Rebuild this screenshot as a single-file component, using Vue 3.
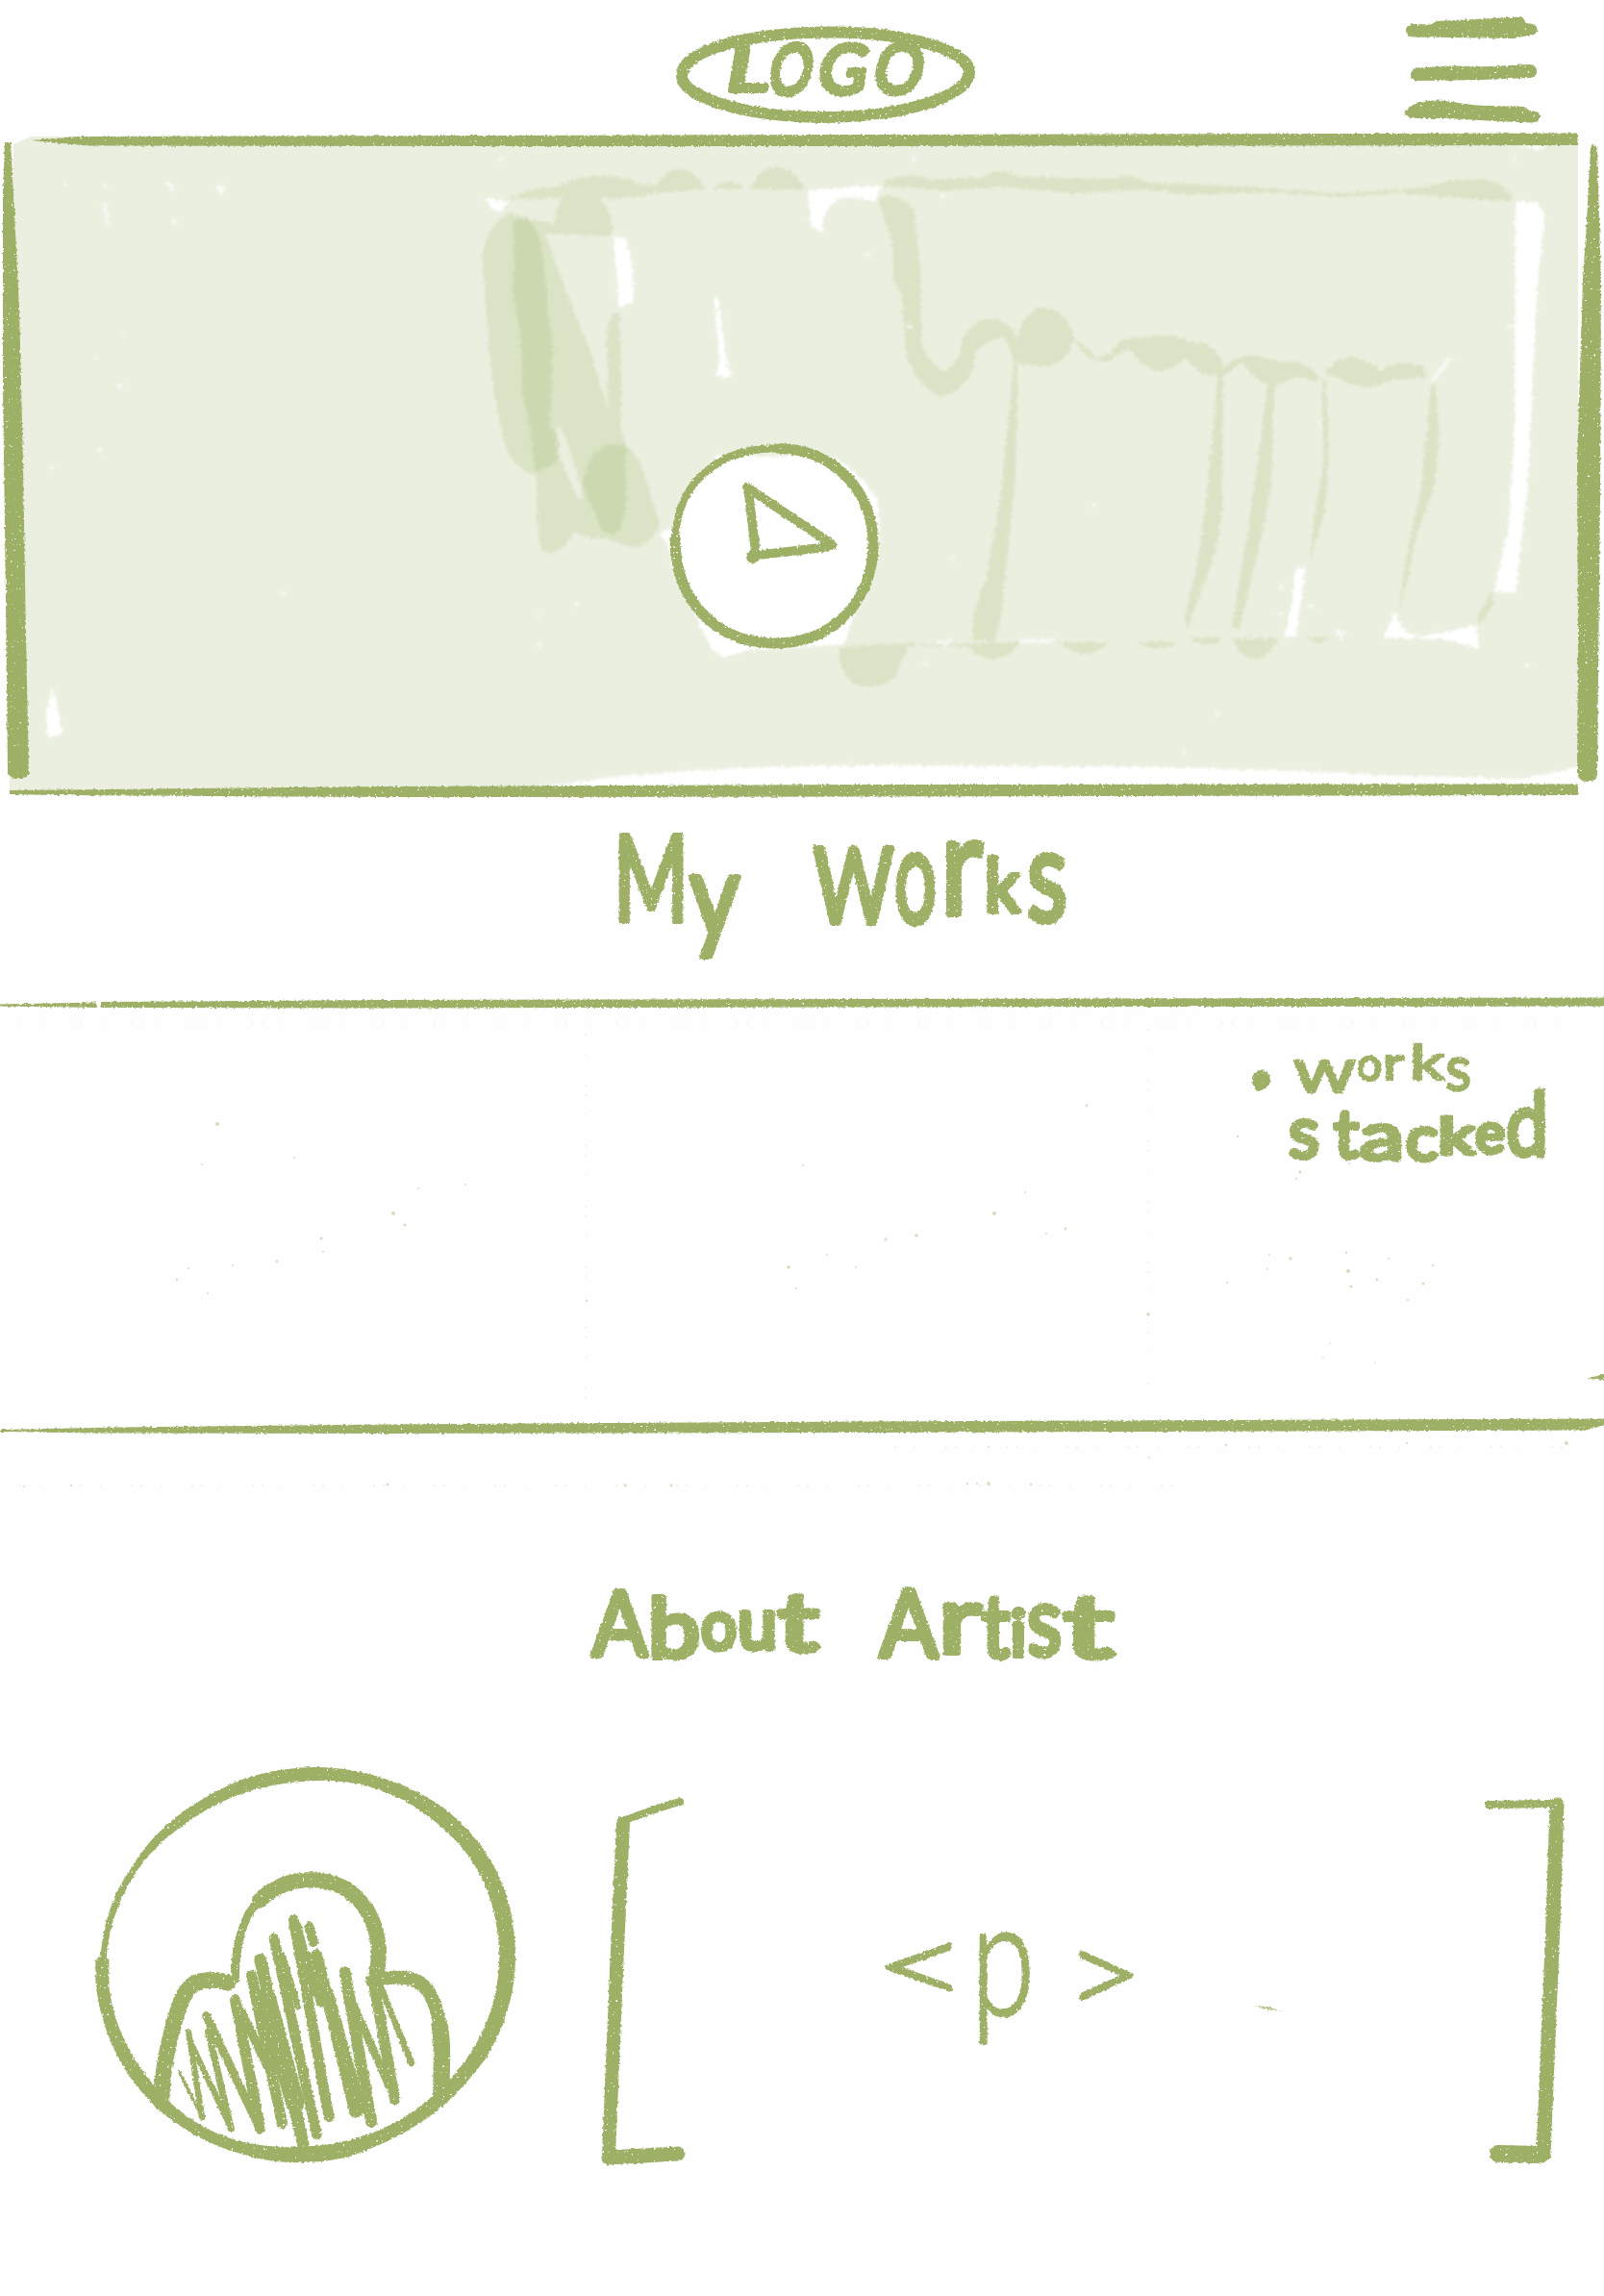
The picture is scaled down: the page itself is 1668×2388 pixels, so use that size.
<script setup>
// Each glyph: character, x, baseline, font size, drawn width
const logo = [['L', 768, 94, 62, 42], ['O', 812, 98, 72, 44], ['G', 863, 97, 70, 50], ['O', 921, 97, 72, 50]]
const my = [['M', 638, 958, 124, 78], ['y', 717, 974, 122, 52]]
const works = [['W', 846, 960, 108, 83], ['o', 930, 960, 138, 44], ['r', 978, 951, 146, 44], ['k', 1024, 948, 76, 36], ['s', 1068, 958, 134, 42]]
const noteA = [['w', 1345, 1136, 66, 65], ['o', 1411, 1124, 48, 26], ['r', 1438, 1123, 48, 22], ['k', 1466, 1123, 50, 36], ['s', 1503, 1134, 66, 27]]
const noteB = [['s', 1340, 1204, 76, 32], ['t', 1387, 1204, 70, 26], ['a', 1414, 1206, 70, 46], ['c', 1462, 1207, 66, 33], ['k', 1496, 1200, 52, 37], ['e', 1534, 1199, 58, 31], ['d', 1566, 1202, 94, 44]]
const about = [['A', 616, 1722, 93, 57], ['b', 674, 1724, 86, 54], ['o', 729, 1715, 72, 37], ['u', 767, 1715, 76, 41], ['t', 809, 1717, 84, 42]]
const artist = [['A', 915, 1723, 96, 60], ['r', 976, 1719, 96, 44], ['t', 1021, 1724, 92, 29], ['i', 1051, 1722, 66, 16], ['s', 1068, 1722, 100, 36], ['t', 1106, 1724, 92, 52]]
const para = [['<', 908, 2086, 118, 100], ['p', 1010, 2096, 168, 66], ['>', 1108, 2096, 122, 80]]

const specks = [
  [226, 1169, 2], [409, 1262, 2], [421, 1274, 1.6], [334, 1288, 1.5], [288, 1312, 1.4], [184, 1331, 1.3], [336, 1302, 1],
  [210, 1211, 1], [306, 1204, 1], [435, 1236, 1], [484, 1232, 0.9], [216, 1345, 1], [242, 1316, 0.9], [196, 1319, 1],
  [820, 1318, 1.8], [953, 1285, 1.8], [921, 1289, 1.5], [1034, 1262, 2], [1108, 1278, 1.5], [1130, 1150, 1.4], [835, 1212, 1],
  [1088, 1283, 1], [1066, 1240, 1], [860, 1305, 0.9], [890, 1318, 1], [828, 1340, 1], [1194, 1367, 1.8], [610, 1353, 1.2],
  [1342, 1309, 1.7], [1402, 1322, 2], [1405, 1338, 1.6], [1400, 1303, 1.3], [1432, 1331, 1.4], [1480, 1335, 1.6], [1490, 1316, 1.2],
  [1320, 1305, 1], [1318, 1320, 1], [1444, 1309, 1], [1276, 1334, 1], [1352, 1219, 1.6], [1348, 1226, 1.1], [1403, 1210, 1],
  [1287, 1182, 1.2], [1464, 1352, 1], [1376, 1412, 0.8], [1430, 1417, 0.8], [1383, 1397, 0.8],
  [403, 1544, 1.4], [650, 1545, 1.4], [698, 1545, 1.4], [1028, 1543, 1.8], [1006, 1543, 1.2], [1072, 1544, 1.2], [1016, 1543, 1],
  [74, 1545, 1], [25, 1546, 1], [1275, 1503, 1.2], [1629, 1501, 2], [1463, 1501, 1], [1028, 1505, 1], [1195, 1516, 0.9]
]
const flecks = [
  [67, 192], [176, 192], [230, 195], [109, 194], [128, 347], [54, 486], [125, 402], [104, 469], [100, 373], [181, 231], [295, 617],
  [561, 670], [559, 643], [600, 628], [521, 165], [902, 265], [951, 165], [1138, 526], [963, 690], [1373, 441], [1570, 340],
  [1331, 638], [1363, 631], [1332, 611], [1231, 783], [1266, 743], [1588, 692], [981, 204], [1575, 163], [992, 580], [945, 339]
]
const hatch = [
  ['M318 1002 L392 1150', 9], ['M348 880 L390 1145', 19], ['M360 925 L482 1182', 19], ['M410 880 L480 1180', 22], ['M404 830 L570 1180', 27],
  ['M494 782 L572 1182', 34], ['M512 815 L600 1000', 27], ['M545 705 L640 1165', 34], ['M572 655 L706 1230', 38], ['M590 770 L680 1100', 60],
  ['M615 588 L748 1200', 32], ['M640 640 L690 800', 20], ['M676 530 L786 1145', 33], ['M690 550 L742 760', 22],
  ['M724 552 L738 600', 30], ['M718 640 L760 790', 26], ['M748 640 L868 1130', 36], ['M780 760 L880 1120', 42], ['M836 694 L918 1160', 36],
  ['M860 790 L975 1050', 25], ['M928 740 L992 1090', 34], ['M950 745 L1044 978', 20]
]
</script>

<template>
  <main class="page">
    <header class="topbar">
      <svg class="brand" viewBox="700 12 316 120">
        <defs>
          <filter id="crayon" filterUnits="userSpaceOnUse" x="0" y="0" width="1668" height="2388">
            <feTurbulence type="fractalNoise" baseFrequency="0.35" numOctaves="2" seed="4" result="grain" />
            <feDisplacementMap in="SourceGraphic" in2="grain" scale="3.5" xChannelSelector="R" yChannelSelector="G" result="rough" />
            <feColorMatrix in="grain" type="matrix" values="0 0 0 0 0  0 0 0 0 0  0 0 0 0 0  0 0 -12 0 9.7" result="holes" />
            <feComposite in="rough" in2="holes" operator="in" />
          </filter>
          <filter id="smudge" filterUnits="userSpaceOnUse" x="0" y="0" width="1668" height="2388">
            <feTurbulence type="fractalNoise" baseFrequency="0.3" numOctaves="2" seed="9" result="grain" />
            <feDisplacementMap in="SourceGraphic" in2="grain" scale="9" xChannelSelector="R" yChannelSelector="G" result="rough" />
            <feGaussianBlur in="rough" stdDeviation="1.1" />
          </filter>
        </defs>
        <g filter="url(#crayon)">
          <path class="line" stroke-width="12" d="M709 79 C709 53 775 33.500 866 33.500 C950 34 1008 54 1008 75 C1008 100 940 122 853 122 C770 121 709 100 709 79Z" />
          <text class="ink w7" transform="translate(10 0) skewX(-10)">
            <tspan v-for="(g, i) in logo" :key="i" :x="g[1] - 8" :y="g[2]" :font-size="g[3]" :textLength="g[4]" lengthAdjust="spacingAndGlyphs">{{ g[0] }}</tspan>
          </text>
        </g>
      </svg>
      <svg class="burger" viewBox="1450 12 160 120">
        <g class="ink" filter="url(#crayon)">
          <path d="M1469 25 L1488 25.500 L1494 22 L1583 17.500 L1588 24 Q1599 25 1599 31 Q1599 37 1588 37 L1574 40 L1470 38.500 Q1462 38 1462 31.500 Q1462 26 1469 25Z" />
          <path d="M1474 70.500 L1512 68.500 L1540 69.500 L1591 67 Q1598 68 1598 74 Q1598 81 1590 81 L1540 83 L1474 84 Q1467 83 1467 77.500 Q1468 71 1474 70.500Z" />
          <path d="M1461 117 Q1463 111 1476 106.500 Q1490 103 1510 106 L1535 109.500 L1585 111 L1590 115 Q1601 115 1601.500 121 Q1601 128 1591 127.500 L1555 126 L1505 123 L1470 123 Q1461 122 1461 117Z" />
        </g>
      </svg>
    </header>

    <section class="hero">
      <svg viewBox="0 132 1668 708">
        <path fill="#eaefdf" d="M14 150 L32 142 H1641 V826 H10 V800Z" />
        <g filter="url(#smudge)">
          <g transform="translate(480 160) scale(.33333 .35714)">
            <g fill="#dbe3c6">
              <path d="M150 130 Q220 95 300 95 Q360 65 440 63 Q520 66 560 92 L605 92 Q640 45 680 46 Q735 50 760 105 L600 115 L530 128Z" />
              <path d="M785 100 Q830 65 878 95 L870 104Z M900 103 Q930 38 980 38 Q1045 45 1068 104Z" />
              <path d="M150 172 Q190 185 285 205 Q300 150 310 130 L420 122 Q470 150 470 240 L262 232 L330 410 L400 570 L452 735 L458 740 L452 520 Q465 455 490 465 Q500 540 497 800 L515 850 Q570 900 590 1000 L618 1080 Q590 1145 530 1145 L450 1120 Q390 1125 352 1100 Q320 1165 260 1160 Q240 1145 240 1110 L232 935 Q170 925 140 860 Q110 780 85 560 L64 300 Q80 200 150 172Z" />
            </g>
            <g fill="#ccd9b0">
              <path d="M160 200 Q205 165 235 225 Q262 300 265 420 L285 560 L275 790 Q300 820 300 880 Q290 925 228 925 Q215 800 190 700 L185 540 L157 390 L165 320Z" />
              <path d="M390 920 Q410 850 470 846 L512 850 L512 920 Q525 1060 480 1110 Q450 1115 430 1080 Q380 980 375 960Z" />
            </g>
            <path fill="#eaefdf" d="M298 785 L320 820 L370 950 L375 1005 L360 1000 L305 880Z" />
            <g fill="#fff">
              <path d="M70 128 L150 140 L125 168 L98 162Z M472 240 L510 245 Q545 340 535 430 L490 450 L484 350Z" />
              <path d="M788 415 L800 418 L832 630 L850 632 L825 655 L795 645 L805 600Z" />
              <path d="M1080 105 L1305 95 L1290 135 L1200 125 Q1150 140 1130 180 L1125 232 L1090 210Z" />
              <path d="M800 880 Q690 960 655 1090 L615 1105 Q650 1130 655 1200 L735 1350 Q770 1450 820 1468 L900 1445 L1160 1430 L1195 1430 L1220 1350 Q1320 1200 1298 1010 Q1220 890 1120 880Z" />
            </g>
            <path fill="#dbe3c6" d="M1180 1440 L1420 1422 L1390 1440 Q1370 1490 1350 1525 Q1290 1570 1220 1540 Q1170 1500 1180 1440Z" />
          </g>
          <g transform="translate(880 160) scale(.50255 .43367)">
            <g fill="#dbe3c6">
              <path d="M70 75 Q115 38 175 62 L280 55 Q320 28 355 55 L550 60 Q590 42 625 68 L850 80 L1020 95 L1180 82 Q1310 48 1345 70 Q1375 85 1380 112 L1300 110 Q1200 98 1140 95 L1020 103 L870 92 L710 98 L620 85 L470 95 L330 80 L200 88Z" />
              <path d="M65 105 Q110 95 140 130 L155 300 L155 450 Q175 515 205 520 Q235 500 240 450 Q260 395 305 395 Q340 400 355 445 Q365 370 415 368 Q460 380 470 440 L520 490 L545 480 Q570 435 610 442 Q670 425 710 450 Q770 450 780 510 Q810 480 850 485 L900 500 Q950 490 980 540 Q1010 485 1050 487 Q1090 500 1105 522 Q1140 490 1195 510 L1200 535 L1120 545 Q1080 575 1030 545 L990 525 L975 545 L930 535 L880 560 Q840 540 820 500 L785 530 L740 530 L700 490 Q650 550 600 490 L585 465 L540 500 L500 490 L470 445 Q460 505 400 512 L350 500 L328 440 L305 445 L270 470 Q260 565 200 582 Q145 565 125 480 L115 340 L98 300 L95 210Z" />
              <path d="M347 500 L355 500 L350 780 L325 1050 Q322 1130 305 1170 L260 1165 Q260 1090 290 1020 L320 820Z" />
              <path d="M770 520 L780 520 L778 850 Q775 930 740 1030 L705 1140 L700 1110 L725 1000 L750 780Z M873 545 L885 545 L880 800 L835 1040 L812 1140 L798 1135 L835 880Z" />
              <path d="M985 545 L993 545 Q1005 790 985 880 L960 975 L970 860 L988 740Z M1210 555 L1219 555 Q1238 740 1205 840 Q1175 920 1165 1000 L1143 1100 L1155 990 L1190 800Z M1335 1050 L1340 1080 L1310 1130 L1308 1105Z" />
              <path d="M0 1178 L255 1175 L358 1170 Q340 1212 300 1212 Q260 1200 255 1182 L125 1178 L0 1182Z M440 1172 L545 1172 Q500 1225 440 1172Z M600 1170 H685 Q650 1205 600 1170Z M710 1160 H780 Q750 1195 710 1160Z M800 1162 H895 Q870 1215 840 1212 Q810 1200 800 1162Z M950 1160 H1010 L970 1175Z" />
            </g>
            <g fill="#fff">
              <path d="M0 80 L75 78 L60 115 L0 100Z M1385 112 L1430 118 L1445 145 L1430 320 L1410 800 L1385 1055 L1340 1050 L1370 900 L1382 690Z" />
              <path d="M930 990 L950 995 L932 1155 L905 1160 L920 1095Z M1136 1100 L1155 1145 L1190 1158 L1305 1130 L1310 1187 L1240 1165 L1110 1160Z" />
              <path opacity=".6" d="M1205 545 L1248 485 L1255 490 L1220 545Z M355 1162 L435 1160 L430 1172 L360 1175Z M185 1168 L220 1165 L205 1182Z M1010 1140 L1035 1145 L1025 1165Z" />
            </g>
          </g>
          <path fill="#fff" d="M640 808 Q760 796 900 796 L1150 797 Q1330 800 1430 806 L1580 810 L1641 798 V816 L560 818Z" />
          <path fill="#fff" d="M54 715 L60 738 L65 763 L50 768 L47 745Z M1575 150 L1608 152 L1600 156Z" />
          <path fill="#fff" opacity=".6" d="M106 210 L111 210 L114 235 L109 232Z M171 190 L184 193 L178 199Z M224 191 L236 196 L229 203Z" />
          <circle v-for="(f, i) in flecks" :key="i" :cx="f[0]" :cy="f[1]" r="2.500" fill="#fff" opacity=".6" />
        </g>
        <g class="ink" filter="url(#crayon)">
          <path d="M32 146 L80 142 L500 141 L900 140 L1641 138.500 V151 L900 152 L500 152 L90 151.500Z" />
          <path d="M10 822 L400 818 L900 816 L1641 815.500 V827 L900 828.500 L400 829 L60 827 L10 826Z" />
          <path d="M5 148 L11 148 L14 200 L20 320 L24 480 L27 660 L30 805 Q19 815 8 805 L6 620 L3 400 L3 200Z" />
          <path d="M1654 154 Q1657 147 1661 154 L1663 230 L1665 290 L1664 520 L1662 700 L1661 806 Q1658 814 1650 813 Q1642 813 1640 804 L1641 660 L1640 480 L1646 290 L1650 230Z" />
        </g>
        <g filter="url(#crayon)">
          <path class="line" stroke-width="11" d="M702 560 C702 625 745 669 806 669 C866 669 908 625 908 566 C908 508 864 467 810 466.500" />
          <path class="line" stroke-width="8" d="M810 466.500 C748 464 707 503 703 552" />
          <path class="line" stroke-width="9.500" d="M777 507 L865 566 Q867 568 860 569 L782 578 M778 508 L786 576" />
          <circle class="ink" cx="783" cy="579" r="7" />
        </g>
      </svg>
    </section>

    <section class="title works-title">
      <svg viewBox="0 840 1668 190">
        <g class="ink" filter="url(#crayon)">
          <text class="w7">
            <tspan v-for="(g, i) in my" :key="i" :x="g[1]" :y="g[2]" :font-size="g[3]" :textLength="g[4]" lengthAdjust="spacingAndGlyphs">{{ g[0] }}</tspan>
          </text>
          <text class="w7">
            <tspan v-for="(g, i) in works" :key="i" :x="g[1]" :y="g[2]" :font-size="g[3]" :textLength="g[4]" lengthAdjust="spacingAndGlyphs">{{ g[0] }}</tspan>
          </text>
        </g>
      </svg>
    </section>

    <section class="works">
      <svg viewBox="0 1030 1668 530">
        <g class="ink" filter="url(#crayon)">
          <path d="M0 1044.500 L100 1042.500 L101 1048 L0 1046.500Z M105 1042 L400 1040 L900 1039 L1668 1037.500 V1046.500 L900 1047.500 L400 1048.500 L105 1048Z" />
          <path d="M0 1487 L120 1484.500 L400 1481.500 L900 1478.500 L1668 1475.500 V1482 L1650 1487.500 L900 1490 L400 1491 L100 1490.500 L0 1489Z" />
          <path d="M1650 1434 L1668 1429 V1435Z" />
          <path d="M1302 1121 Q1304 1113 1312 1113 Q1320 1114 1321 1123 Q1321 1130 1314 1133 L1308 1135 L1303 1129Z" />
          <text class="w3">
            <tspan v-for="(g, i) in noteA" :key="i" :x="g[1]" :y="g[2]" :font-size="g[3]" :textLength="g[4]" lengthAdjust="spacingAndGlyphs">{{ g[0] }}</tspan>
          </text>
          <text class="w5">
            <tspan v-for="(g, i) in noteB" :key="i" :x="g[1]" :y="g[2]" :font-size="g[3]" :textLength="g[4]" lengthAdjust="spacingAndGlyphs">{{ g[0] }}</tspan>
          </text>
        </g>
        <circle v-for="(s, i) in specks" :key="i" :cx="s[0]" :cy="s[1]" :r="s[2]" fill="#9eaf66" opacity=".4" />
        <path class="dust" d="M609 1075 V1460 M1194 1070 V1440 M20 1064 H1640 M20 1545 H1230 M930 1505 H1640" />
      </svg>
    </section>

    <section class="title about-title">
      <svg viewBox="0 1560 1668 260">
        <g class="ink" filter="url(#crayon)">
          <text class="w6">
            <tspan v-for="(g, i) in about" :key="i" :x="g[1]" :y="g[2]" :font-size="g[3]" :textLength="g[4]" lengthAdjust="spacingAndGlyphs">{{ g[0] }}</tspan>
          </text>
          <text class="w6">
            <tspan v-for="(g, i) in artist" :key="i" :x="g[1]" :y="g[2]" :font-size="g[3]" :textLength="g[4]" lengthAdjust="spacingAndGlyphs">{{ g[0] }}</tspan>
          </text>
        </g>
      </svg>
    </section>

    <section class="about">
      <svg class="avatar" viewBox="80 1820 480 450">
        <g filter="url(#crayon)">
          <g transform="translate(80 1820) scale(.33333)">
            <path class="ink" d="M58 655 Q80 635 100 655 L100 740 C115 860 170 980 290 1100 C400 1200 520 1235 650 1240 C820 1240 980 1200 1115 1075 C1250 960 1318 800 1318 640 C1310 440 1240 300 1050 175 C950 115 850 92 740 97 C620 100 500 130 400 190 C300 250 220 320 170 405 C120 490 98 570 92 650 L74 645 C80 560 105 460 165 375 C240 250 340 170 500 98 C580 68 660 55 740 54 C880 52 1030 100 1150 185 C1290 300 1365 440 1368 640 C1368 770 1330 880 1270 970 C1150 1130 1040 1200 850 1270 C740 1295 620 1295 520 1262 C380 1225 270 1150 200 1065 C120 970 70 850 58 720Z" />
            <path class="line" stroke-width="50" stroke-linecap="butt" d="M264 1100 C264 1000 290 880 325 785 C350 725 375 718 425 718 Q450 718 470 727" />
            <path class="line" stroke-width="26" d="M494 715 C492 620 515 520 570 470" />
            <path class="line" stroke-width="48" d="M570 470 C620 420 675 405 740 406 C850 412 935 490 942 630 Q940 680 932 715" />
            <path class="line" stroke-width="42" d="M922 722 C1000 700 1060 705 1095 750 Q1130 810 1135 880" />
            <path class="line" stroke-width="52" d="M1132 860 C1145 940 1135 1000 1137 1070" />
            <path v-for="(h, i) in hatch" :key="i" class="line" :stroke-width="h[1]" :d="h[0]" />
          </g>
        </g>
      </svg>
      <svg class="bio" viewBox="600 1850 1068 420">
        <g filter="url(#crayon)">
          <path class="line" stroke-width="8" d="M707 1874 Q685 1880 650 1893" />
          <path class="line" stroke-width="14" d="M648 1896 L641 2050 L633 2242" />
          <path class="line" stroke-width="15" d="M633 2244 L705 2240" />
          <path class="line" stroke-width="8" d="M1548 1877 L1612 1876" />
          <path class="line" stroke-width="15" d="M1619 1877 L1615 2000 L1605 2241" />
          <path class="line" stroke-width="18" d="M1558 2240 L1602 2241" />
          <text class="ink w2">
            <tspan v-for="(g, i) in para" :key="i" :x="g[1]" :y="g[2]" :font-size="g[3]" :textLength="g[4]" lengthAdjust="spacingAndGlyphs">{{ g[0] }}</tspan>
          </text>
          <path class="ink" opacity=".7" d="M1306 2086 L1318 2087 L1333 2092 L1316 2090Z" />
        </g>
      </svg>
    </section>
  </main>
</template>

<style>
body { background: #fefefe; }
</style>

<style scoped>
.page {
  display: flex;
  flex-direction: column;
  width: 1668px;
  height: 2388px;
  overflow: hidden;
  background: #fefefe;
  font-family: Lato, "Open Sans", sans-serif;
}
svg { display: block; }
.topbar {
  display: flex;
  justify-content: space-between;
  height: 120px;
  padding: 12px 58px 0 700px;
}
.brand { width: 316px; height: 120px; }
.burger { width: 160px; height: 120px; }
.hero svg { width: 1668px; height: 708px; }
.works-title svg { width: 1668px; height: 190px; }
.works svg { width: 1668px; height: 530px; }
.about-title svg { width: 1668px; height: 260px; }
.about {
  display: flex;
  align-items: flex-start;
  gap: 40px;
  padding-left: 80px;
}
.avatar { width: 480px; height: 450px; flex: none; }
.bio { width: 1068px; height: 420px; flex: none; margin-top: 30px; }
.ink { fill: #9eaf66; }
.line {
  fill: none;
  stroke: #9eaf66;
  stroke-linecap: round;
  stroke-linejoin: round;
}
.dust {
  fill: none;
  stroke: #9eaf66;
  stroke-width: 1.5;
  stroke-dasharray: 2 19 1 31 2 8;
  opacity: .16;
}
text {
  stroke: #9eaf66;
  stroke-linejoin: round;
  font-weight: 400;
}
.w2 { stroke-width: 3px; font-weight: 300; }
.w3 { stroke-width: 2.5px; }
.w5 { stroke-width: 5px; }
.w6 { stroke-width: 6px; }
.w7 { stroke-width: 6px; }
</style>
